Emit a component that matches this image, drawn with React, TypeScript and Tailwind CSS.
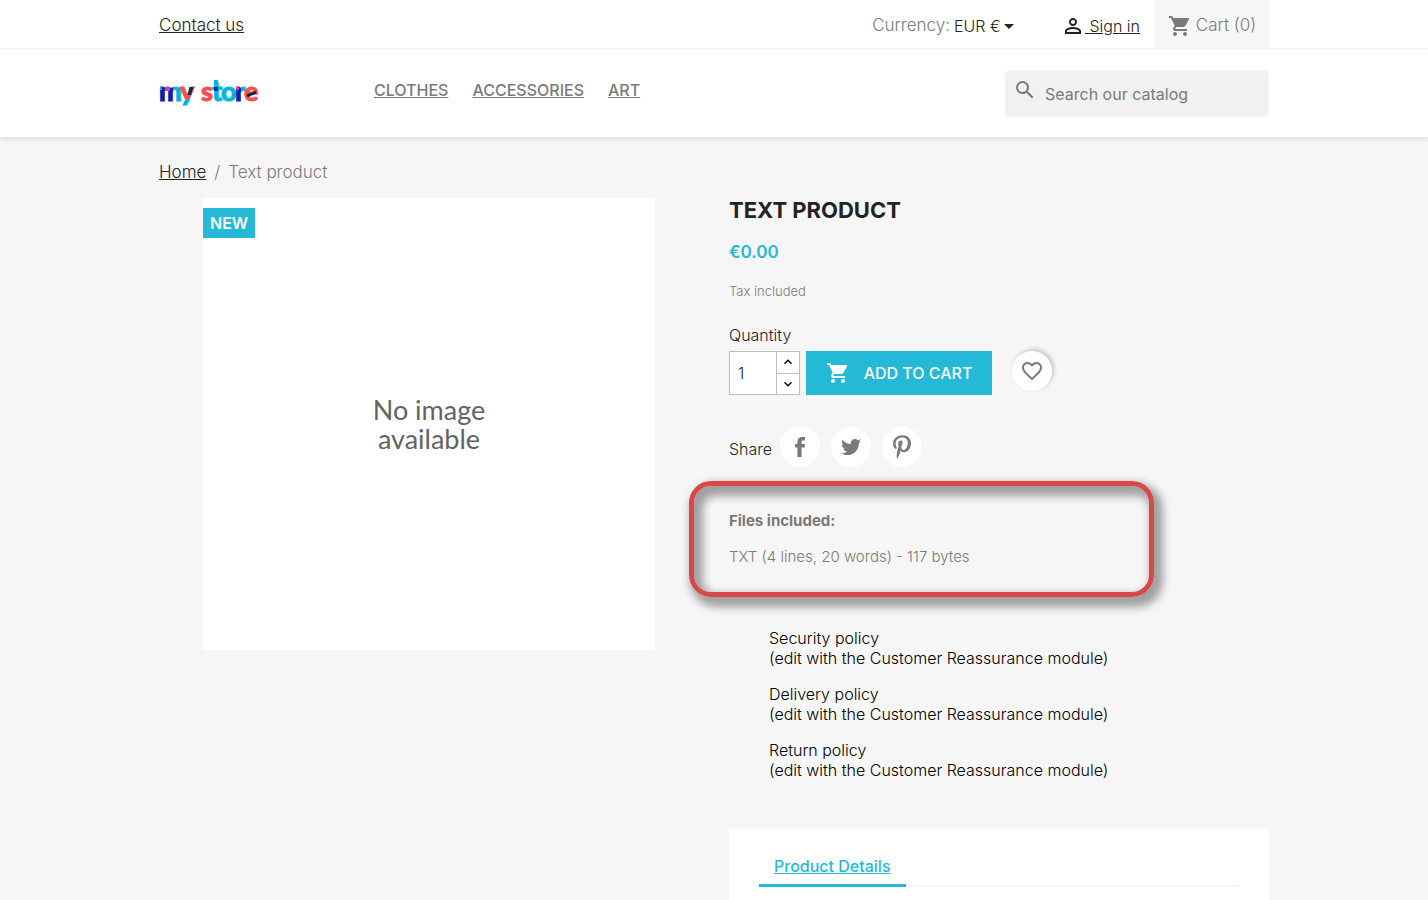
import React from "react";
import {
  MdShoppingCart,
  MdPersonOutline,
  MdSearch,
  MdFavoriteBorder,
  MdKeyboardArrowUp,
  MdKeyboardArrowDown,
  MdArrowDropDown,
} from "react-icons/md";
import { FaTwitter, FaPinterestP } from "react-icons/fa";

const logoLetters = [
  { char: "m", x: 0, fill: "url(#logo-m)" },
  { char: "y", x: 21, fill: "url(#logo-y)" },
  { char: "s", x: 42, fill: "#ff4c4c" },
  { char: "t", x: 53, fill: "#00b5e2" },
  { char: "o", x: 62, fill: "#00b5e2" },
  { char: "r", x: 76, fill: "url(#logo-r)" },
  { char: "e", x: 85, fill: "#ff4c4c" },
];

function Logo() {
  return (
    <svg
      viewBox="0 0 100 32"
      className="block h-8 w-[100px] overflow-visible"
      role="img"
      aria-label="my store"
      fontFamily="Lato, sans-serif"
      fontWeight="900"
      fontSize="27"
    >
      <defs>
        <linearGradient id="logo-m" gradientUnits="userSpaceOnUse" x1="0" x2="22" y1="0" y2="0">
          <stop offset="0.65" stopColor="#0c23a3" />
          <stop offset="0.65" stopColor="#00b5e2" />
        </linearGradient>
        <linearGradient id="logo-y" gradientUnits="userSpaceOnUse" x1="0" x2="0" y1="10" y2="32">
          <stop offset="0.6" stopColor="#ff4c4c" />
          <stop offset="0.6" stopColor="#00b5e2" />
        </linearGradient>
        <linearGradient id="logo-r" gradientUnits="userSpaceOnUse" x1="76" x2="86" y1="0" y2="0">
          <stop offset="0.6" stopColor="#0c23a3" />
          <stop offset="0.6" stopColor="#00b5e2" />
        </linearGradient>
      </defs>
      {logoLetters.map((l) => (
        <text key={l.char} x={l.x} y="25" fill={l.fill} stroke={l.fill} strokeWidth="0.9">
          {l.char}
        </text>
      ))}
      <rect x="6" y="11" width="5" height="4" fill="#d63fb0" />
      <rect x="1" y="11" width="2" height="3" fill="#00b5e2" />
      <path d="M30.500 11h4l-2.500 8h-3.500z" fill="#04303f" />
      <path d="M55 4h4v8h-4z" fill="#00b5e2" />
      <rect x="55" y="11" width="4" height="4" fill="#0c23a3" />
      <rect x="77" y="11" width="3" height="3" fill="#d63fb0" />
      <path d="M88 20l9-4" stroke="#04303f" strokeWidth="3" />
    </svg>
  );
}

function FacebookIcon() {
  return (
    <svg viewBox="0 0 10 20" className="h-5 w-[10px]" fill="currentColor" aria-hidden="true">
      <path d="M10 0v3.600H8C6.900 3.600 6.600 4 6.600 4.900V7H10l-.4 3.600h-3V20H2.400v-9.400H0V7h2.400V4.500C2.400 1.500 4.300 0 7.200 0z" />
    </svg>
  );
}

const categories = ["Clothes", "Accessories", "Art"];
const policies = ["Security policy", "Delivery policy", "Return policy"];

function Header() {
  return (
    <header className="relative bg-white shadow-[0_2px_5px_0_rgba(0,0,0,0.11)]">
      <nav className="border-b-2 border-[#f6f6f6]">
        <div className="mx-auto flex h-12 max-w-[1110px] items-center text-[17px] font-light">
          <a href="#contact" className="pt-[3px] text-[#232323] underline">
            Contact us
          </a>
          <div className="ml-auto flex items-center pt-[3px] text-[#7a7a7a]">
            <label htmlFor="currency">Currency:</label>
            <select
              id="currency"
              className="ml-1 appearance-none bg-transparent text-base text-[#232323]"
            >
              <option>EUR €</option>
            </select>
            <MdArrowDropDown className="-ml-1 size-6 text-[#232323]" aria-hidden="true" />
          </div>
          <a href="#signin" className="ml-10 flex items-center pt-[3px] text-base text-[#232323]">
            <MdPersonOutline className="size-6" aria-hidden="true" />
            <span className="whitespace-pre underline"> Sign in</span>
          </a>
          <a
            href="#cart"
            className="ml-[15px] flex h-full w-[114px] items-center justify-center gap-1 bg-[#f6f6f6] pt-[3px] text-[#7a7a7a]"
          >
            <MdShoppingCart className="size-6" aria-hidden="true" />
            Cart (0)
          </a>
        </div>
      </nav>
      <div className="mx-auto flex max-w-[1110px] items-start pt-5 pb-5">
        <a href="#home" className="mt-1.5 w-[215px]">
          <Logo />
        </a>
        <nav className="mt-2 flex gap-6 text-base font-medium text-[#7a7a7a] uppercase">
          {categories.map((c) => (
            <a key={c} href="#category" className="underline">
              {c}
            </a>
          ))}
        </nav>
        <form className="ml-auto flex h-[47px] w-[264px] items-start rounded-[5px] bg-[#f1f1f1] text-[#7a7a7a]">
          <MdSearch className="mt-2 ml-2 size-6 shrink-0" aria-hidden="true" />
          <input
            type="text"
            aria-label="Search"
            placeholder="Search our catalog"
            className="h-full w-full min-w-0 bg-transparent pl-2 text-base outline-none placeholder:text-[#7a7a7a]"
          />
        </form>
      </div>
    </header>
  );
}

function Quantity() {
  return (
    <div className="flex h-11 w-[71px] border border-[#bdbdbd] bg-white">
      <input
        id="quantity"
        type="text"
        defaultValue="1"
        className="w-[46px] min-w-0 pl-2 text-base font-light text-[#232323] outline-none"
      />
      <div className="flex flex-1 flex-col border-l border-[#bdbdbd] text-black">
        <button type="button" aria-label="Increase" className="flex flex-1 items-center justify-center">
          <MdKeyboardArrowUp className="size-4" />
        </button>
        <button
          type="button"
          aria-label="Decrease"
          className="flex flex-1 items-center justify-center border-t border-[#bdbdbd]"
        >
          <MdKeyboardArrowDown className="size-4" />
        </button>
      </div>
    </div>
  );
}

const shareLink = "flex size-10 items-center justify-center rounded-full bg-white text-[#7a7a7a]";

export default function App() {
  return (
    <div className="min-h-screen bg-[#f6f6f6] font-['Inter',sans-serif] text-[#232323]">
      <Header />
      <main className="mx-auto max-w-[1110px] pt-[23px]">
        <nav aria-label="Breadcrumb">
          <ol className="flex gap-2 text-[17px] leading-6 font-light text-[#7a7a7a]">
            <li>
              <a href="#home" className="text-[#232323] underline">
                Home
              </a>
            </li>
            <li aria-hidden="true">/</li>
            <li>Text product</li>
          </ol>
        </nav>

        <div className="mt-[14px] grid grid-cols-2 items-start gap-[30px]">
          <div className="relative mx-11 flex aspect-square items-center justify-center bg-white">
            <span className="absolute top-[10px] left-0 bg-[#24b9d7] px-[7px] py-[3px] text-base font-semibold text-white">
              NEW
            </span>
            <p className="text-center font-['Lato',sans-serif] text-[27px] leading-[29px] text-[#636363]">
              No image
              <br />
              available
            </p>
          </div>

          <section>
            <h1 className="text-[22px] leading-6 font-bold uppercase">Text product</h1>
            <p className="mt-[18px] text-[17px] leading-6 font-semibold text-[#24b9d7]">€0.00</p>
            <p className="mt-[17px] text-[13px] leading-5 font-light text-[#7a7a7a]">Tax included</p>

            <label htmlFor="quantity" className="mt-[22px] block text-base leading-6 font-light">
              Quantity
            </label>
            <div className="mt-1 flex items-start">
              <Quantity />
              <button
                type="button"
                className="ml-1.5 flex h-11 w-[186px] items-center justify-center gap-[14px] bg-[#24b9d7] text-base font-medium text-white uppercase"
              >
                <MdShoppingCart className="size-6" aria-hidden="true" />
                Add to cart
              </button>
              <button
                type="button"
                aria-label="Add to wishlist"
                className="ml-5 flex size-10 items-center justify-center rounded-full bg-white text-[#7a7a7a] shadow-[2px_-2px_4px_0_rgba(0,0,0,0.2)]"
              >
                <MdFavoriteBorder className="size-6" />
              </button>
            </div>

            <div className="mt-8 flex items-center text-base font-light">
              <span className="pt-1">Share</span>
              <div className="ml-2 flex gap-[11px]">
                <a href="#facebook" aria-label="Facebook" className={shareLink}>
                  <FacebookIcon />
                </a>
                <a href="#twitter" aria-label="Twitter" className={shareLink}>
                  <FaTwitter className="size-5" />
                </a>
                <a href="#pinterest" aria-label="Pinterest" className={shareLink}>
                  <FaPinterestP className="size-6" />
                </a>
              </div>
            </div>

            <div className="mt-[14px] -ml-10 max-w-[465px] rounded-[22px] border-[5px] border-[#d94848] py-[23px] pl-[35px] text-[15px] leading-6 text-[#7a7a7a] shadow-[5px_6px_9px_4px_rgba(0,0,0,0.35),inset_5px_6px_9px_4px_rgba(0,0,0,0.35)]">
              <p className="font-bold">Files included:</p>
              <p className="mt-3 font-light">TXT (4 lines, 20 words) - 117 bytes</p>
            </div>

            <ul className="mt-[31px] flex flex-col gap-4 pl-10 text-base leading-5 font-light text-black">
              {policies.map((p) => (
                <li key={p}>
                  {p}
                  <br />
                  (edit with the Customer Reassurance module)
                </li>
              ))}
            </ul>

            <div className="mt-[49px] bg-white px-[30px] pt-[25px] pb-[13px]">
              <ul className="flex border-b-2 border-[#f6f6f6]">
                <li className="-mb-0.5">
                  <a
                    href="#details"
                    className="block border-b-[3px] border-[#24b9d7] px-[15px] pb-1.5 text-base leading-6 font-medium text-[#24b9d7] underline"
                  >
                    Product Details
                  </a>
                </li>
              </ul>
            </div>
          </section>
        </div>
      </main>
    </div>
  );
}
